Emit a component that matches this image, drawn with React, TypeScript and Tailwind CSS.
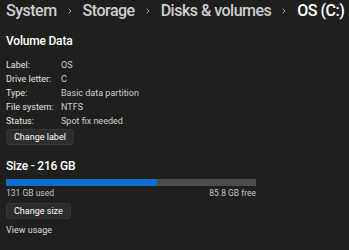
import { ChevronRight } from 'lucide-react';

const rows: [string, string][] = [
  ['Label:', 'OS'],
  ['Drive letter:', 'C'],
  ['Type:', 'Basic data partition'],
  ['File system:', 'NTFS'],
  ['Status:', 'Spot fix needed'],
];

const crumbs = ['System', 'Storage', 'Disks & volumes'];

export default function App() {
  return (
    <div
      className="w-[349px] h-[250px] overflow-hidden bg-[#1f1f1d] text-white px-[6px]"
      style={{ fontFamily: 'Roboto, "Open Sans", sans-serif' }}
    >
      <div className="flex items-center h-[21px] text-[16px] font-medium tracking-[-0.5px] whitespace-nowrap">
        {crumbs.map((c) => (
          <div key={c} className="flex items-center">
            <span className="text-[#cfcfcf]">{c}</span>
            <ChevronRight className="w-[8px] h-[8px] mx-[9px] text-[#bdbdbd]" strokeWidth={2.5} />
          </div>
        ))}
        <span className="text-white">OS (C:)</span>
      </div>

      <div className="mt-[12px] text-[12px] font-medium tracking-[-0.2px] leading-[16px]">Volume Data</div>

      <div className="mt-[9px] flex flex-col text-[9px] leading-[14px] text-[#e4e4e4]">
        {rows.map(([k, v]) => (
          <div key={k} className="flex">
            <span className="w-[55px]">{k}</span>
            <span className="text-[#cfcfcf]">{v}</span>
          </div>
        ))}
      </div>

      <div className="mt-[1px] flex">
        <button className="h-[16px] px-[7px] rounded-[3px] bg-[#2d2d2b] border border-[#363634] text-[9px] leading-none text-white">
          Change label
        </button>
      </div>

      <div className="mt-[13px] text-[12px] font-medium tracking-[-0.2px] leading-[16px]">Size - 216 GB</div>

      <div className="mt-[5px] w-[250px] h-[7px] bg-[#4d4d4b] flex">
        <div className="h-full bg-[#0a6fd0]" style={{ width: `${(131 / 216.8) * 100}%` }} />
      </div>
      <div className="w-[250px] flex justify-between text-[8.5px] leading-[12px] text-[#c4c4c4] mt-[1px]">
        <span>131 GB used</span>
        <span>85.8 GB free</span>
      </div>

      <div className="mt-[4px] flex">
        <button className="h-[16px] px-[7px] rounded-[3px] bg-[#2d2d2b] border border-[#363634] text-[9px] leading-none text-white">
          Change size
        </button>
      </div>

      <div className="mt-[5px] text-[9px] leading-[12px] text-[#dcdcdc]">View usage</div>
    </div>
  );
}
